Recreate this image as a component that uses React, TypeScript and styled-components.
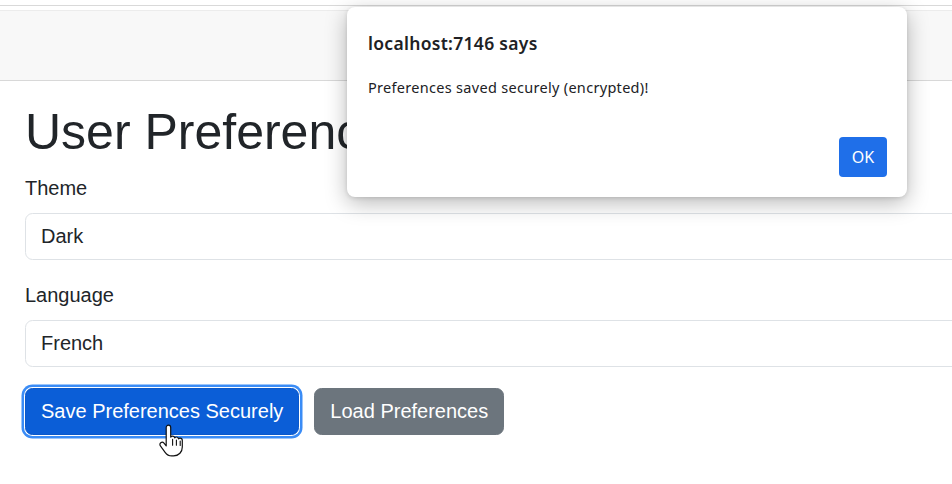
import React from 'react'
import styled, { createGlobalStyle } from 'styled-components'

const GlobalStyle = createGlobalStyle`
  html, body {
    margin: 0;
    padding: 0;
    background: #fff;
    overflow: hidden;
  }
  body {
    font-family: 'Liberation Sans', Arial, sans-serif;
    color: #212529;
  }
`

const Page = styled.div`
  position: relative;
  width: 952px;
  height: 484px;
  overflow: hidden;
`

const TopRule = styled.div`
  height: 5px;
  border-bottom: 1px solid #d9d9d9;
  margin-bottom: 4px;
`

const Navbar = styled.nav`
  height: 69px;
  background: #f8f8f8;
  border-top: 1px solid #ececec;
  border-bottom: 1px solid #d8d8d8;
`

const Container = styled.main`
  padding: 21px 0 0 25px;
`

const Title = styled.h1`
  margin: 0 0 11px;
  font-size: 50px;
  font-weight: 400;
  line-height: 60px;
  color: #212529;
`

const Field = styled.div`
  margin-bottom: 20px;
`

const Label = styled.label`
  display: block;
  font-size: 20px;
  line-height: 30px;
  margin-bottom: 10px;
`

const Input = styled.input`
  box-sizing: border-box;
  display: block;
  width: 1100px;
  height: 47px;
  padding: 7px 15px;
  font-family: 'Liberation Sans', Arial, sans-serif;
  font-size: 20px;
  color: #212529;
  background: #fff;
  border: 1.25px solid #dee2e6;
  border-radius: 7.5px;
  outline: none;
`

const Actions = styled.div`
  display: flex;
  gap: 15px;
  padding-top: 1px;
`

const Button = styled.button<{ $variant: 'primary' | 'secondary'; $focused?: boolean }>`
  position: relative;
  height: 46.5px;
  padding: 0 15px;
  font-family: 'Liberation Sans', Arial, sans-serif;
  font-size: 20px;
  line-height: 30px;
  color: #fff;
  border-radius: 7.5px;
  cursor: pointer;
  background: ${(p) => (p.$variant === 'primary' ? '#0b5ed7' : '#6c757d')};
  border: 1.25px solid ${(p) => (p.$variant === 'primary' ? '#0a58ca' : '#6c757d')};
  box-shadow: ${(p) => (p.$focused ? '0 0 0 1px #fff, 0 0 0 3.5px #3a8cf6' : 'none')};
`

const Pointer = styled.svg`
  position: absolute;
  left: 159px;
  top: 423px;
  pointer-events: none;
`

const Dialog = styled.div`
  position: absolute;
  left: 347px;
  top: 7px;
  width: 560px;
  height: 190px;
  box-sizing: border-box;
  padding: 25px 20px 20px 21px;
  background: #fff;
  border-radius: 8px;
  box-shadow: 0 6px 22px rgba(0, 0, 0, 0.28), 0 1px 4px rgba(0, 0, 0, 0.12);
  font-family: 'Noto Sans', 'Open Sans', sans-serif;
  display: flex;
  flex-direction: column;
`

const DialogTitle = styled.div`
  font-size: 17.5px;
  font-weight: 600;
  line-height: 22px;
  letter-spacing: 0.3px;
  color: #202124;
`

const DialogMessage = styled.div`
  margin-top: 24px;
  font-size: 14.5px;
  line-height: 18px;
  letter-spacing: 0.3px;
  color: #202124;
`

const DialogFooter = styled.div`
  margin-top: auto;
  display: flex;
  justify-content: flex-end;
`

const OkButton = styled.button`
  width: 48px;
  height: 40px;
  border: none;
  border-radius: 4px;
  background: #1f6fe9;
  color: #fff;
  font-family: 'Noto Sans', 'Open Sans', sans-serif;
  font-size: 16px;
`

const HandCursor = () => (
  <Pointer width="30" height="36" viewBox="0 0 30 36">
    <path
      d="M9.5 2.2c1.3 0 2.2 1 2.2 2.3v9.6c.4-.6 1.1-1 1.9-1 1.1 0 1.9.8 2.1 1.7.4-.5 1-.8 1.7-.8 1.1 0 1.9.8 2.1 1.8.4-.4 1-.6 1.6-.6 1.3 0 2.2 1 2.2 2.3v6.4c0 5-3.4 9-8.7 9h-1.9c-3 0-4.9-1.3-6.6-3.6l-4.7-6.4c-.8-1.1-.6-2.5.4-3.2 1-.7 2.4-.5 3.2.5l2.2 2.7V4.5c0-1.3 1-2.3 2.3-2.3z"
      fill="#fff"
      stroke="#111"
      strokeWidth="1.2"
      strokeLinejoin="round"
    />
    <path d="M13.6 16.2v6M17.4 17v5.3M21.2 18v4.5" stroke="#111" strokeWidth="1.1" strokeLinecap="round" />
  </Pointer>
)

export default function App() {
  return (
    <Page>
      <GlobalStyle />
      <TopRule />
      <Navbar />
      <Container>
        <Title>User Preferences</Title>
        <Field>
          <Label htmlFor="theme">Theme</Label>
          <Input id="theme" defaultValue="Dark" readOnly />
        </Field>
        <Field>
          <Label htmlFor="language">Language</Label>
          <Input id="language" defaultValue="French" readOnly />
        </Field>
        <Actions>
          <Button $variant="primary" $focused>
            Save Preferences Securely
          </Button>
          <Button $variant="secondary">Load Preferences</Button>
        </Actions>
      </Container>
      <HandCursor />
      <Dialog role="alertdialog">
        <DialogTitle>localhost:7146 says</DialogTitle>
        <DialogMessage>Preferences saved securely (encrypted)!</DialogMessage>
        <DialogFooter>
          <OkButton>OK</OkButton>
        </DialogFooter>
      </Dialog>
    </Page>
  )
}
